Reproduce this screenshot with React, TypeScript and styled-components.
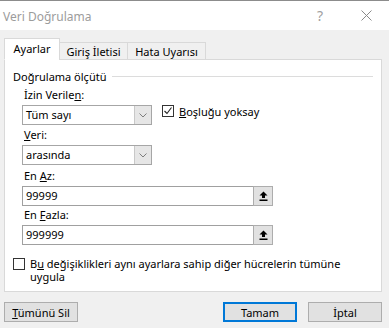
import * as React from "react";
import styled, { createGlobalStyle } from "styled-components";

const GlobalStyle = createGlobalStyle`
  html, body {
    margin: 0;
    padding: 0;
    background: #f0f0f0;
  }
  body {
    font-family: "Noto Sans", "Open Sans", sans-serif;
    font-size: 11px;
    color: #000;
  }
`;

const Window = styled.div`
  width: 389px;
  height: 328px;
  display: flex;
  flex-direction: column;
  background: #f0f0f0;
  overflow: hidden;
`;

const TitleBar = styled.div`
  height: 29px;
  border-top: 1px solid #8c8c8c;
  background: #fff;
  display: flex;
  align-items: center;
  padding-left: 3px;
`;

const Title = styled.div`
  flex: 1;
  color: #9c9c9c;
  font-size: 12px;
  padding-top: 1px;
`;

const TitleButton = styled.div<{ $width: number }>`
  width: ${(p) => p.$width}px;
  height: 29px;
  display: flex;
  align-items: center;
  justify-content: center;
  color: #a0a0a0;
  font-size: 14px;
`;

const Body = styled.div`
  flex: 1;
  display: flex;
  flex-direction: column;
  padding: 8px 7px 0 4px;
`;

const TabStrip = styled.div`
  display: flex;
  align-items: flex-end;
  height: 22px;
  position: relative;
  z-index: 1;
  margin-bottom: -1px;
`;

const Tab = styled.div<{ $active?: boolean; $width: number }>`
  width: ${(p) => p.$width}px;
  height: ${(p) => (p.$active ? 22 : 18)}px;
  box-sizing: border-box;
  border: 1px solid #d9d9d9;
  border-bottom: ${(p) => (p.$active ? "1px solid #fff" : "1px solid #d9d9d9")};
  margin-left: ${(p) => (p.$active ? 0 : -1)}px;
  background: ${(p) => (p.$active ? "#fff" : "#f0f0f0")};
  display: flex;
  align-items: center;
  justify-content: center;
  padding-bottom: ${(p) => (p.$active ? 2 : 0)}px;
  &:first-child {
    margin-left: 0;
  }
`;

const Panel = styled.div`
  height: 233px;
  box-sizing: border-box;
  background: #fff;
  border: 1px solid #d9d9d9;
  padding: 8px 8px 0 8px;
  display: flex;
  flex-direction: column;
`;

const Legend = styled.div`
  display: flex;
  align-items: center;
  height: 16px;
  gap: 6px;
  &::after {
    content: "";
    flex: 1;
    height: 1px;
    background: #dcdcdc;
  }
`;

const Group = styled.div`
  padding-left: 9px;
  display: flex;
  flex-direction: column;
`;

const Label = styled.div<{ $top: number }>`
  height: 16px;
  line-height: 16px;
  margin-top: ${(p) => p.$top}px;
  margin-bottom: 2px;
  padding-left: 2px;
`;

const Row = styled.div`
  display: flex;
  align-items: flex-start;
  gap: 10px;
`;

const Select = styled.div`
  width: 130px;
  height: 20px;
  box-sizing: border-box;
  border: 1px solid #a6a6a6;
  background: #fff;
  display: flex;
  align-items: stretch;
`;

const SelectValue = styled.div`
  flex: 1;
  padding-left: 3px;
  line-height: 18px;
`;

const SelectArrow = styled.div`
  width: 16px;
  background: #e6e6e6;
  border-left: 1px solid #c8c8c8;
  display: flex;
  align-items: center;
  justify-content: center;
`;

const TextField = styled.div`
  width: 251px;
  height: 20px;
  box-sizing: border-box;
  border: 1px solid #a0a0a0;
  background: #fff;
  display: flex;
  align-items: stretch;
`;

const FieldValue = styled.div`
  flex: 1;
  padding-left: 3px;
  line-height: 18px;
`;

const PickButton = styled.div`
  width: 20px;
  box-sizing: border-box;
  background: #e1e1e1;
  border: 1px solid #adadad;
  margin: -1px -1px -1px 0;
  display: flex;
  align-items: center;
  justify-content: center;
`;

const Check = styled.div`
  width: 12px;
  height: 12px;
  box-sizing: border-box;
  border: 1px solid #333;
  background: #fff;
  flex-shrink: 0;
  display: flex;
  align-items: center;
  justify-content: center;
`;

const CheckLabel = styled.label`
  display: flex;
  align-items: flex-start;
  gap: 5px;
  line-height: 13px;
`;

const ApplyRow = styled(CheckLabel)`
  margin-top: 12px;
  width: 330px;
  & > ${Check} {
    margin-top: 1px;
  }
`;

const ButtonRow = styled.div`
  display: flex;
  align-items: center;
  margin-top: 10px;
  gap: 11px;
`;

const Button = styled.div<{ $primary?: boolean }>`
  width: 74px;
  height: 20px;
  box-sizing: border-box;
  background: #e1e1e1;
  border: ${(p) => (p.$primary ? "2px solid #0078d7" : "1px solid #adadad")};
  display: flex;
  align-items: center;
  justify-content: center;
`;

const Spacer = styled.div`
  flex: 1;
`;

const Chevron = () => (
  <svg width="8" height="5" viewBox="0 0 8 5">
    <path d="M0.5 0.5 L4 4 L7.5 0.5" fill="none" stroke="#707070" strokeWidth="0.9" />
  </svg>
);

const UploadIcon = () => (
  <svg width="9" height="10" viewBox="0 0 9 10">
    <path d="M4.5 0.5 L8.5 4.5 L6 4.5 L6 7 L3 7 L3 4.5 L0.5 4.5 Z" fill="#000" />
    <rect x="0.5" y="8.5" width="8" height="1.5" fill="#000" />
  </svg>
);

const CheckMark = () => (
  <svg width="10" height="10" viewBox="0 0 10 10">
    <path d="M1.5 5 L4 7.5 L8.5 1.5" fill="none" stroke="#222" strokeWidth="1.1" />
  </svg>
);

const App: React.FC = () => {
  return (
    <>
      <GlobalStyle />
      <Window>
        <TitleBar>
          <Title>Veri Doğrulama</Title>
          <TitleButton $width={46}>?</TitleButton>
          <TitleButton $width={46}>
            <svg width="11" height="11" viewBox="0 0 11 11">
              <path d="M0.5 0.5 L10.5 10.5 M10.5 0.5 L0.5 10.5" stroke="#8a8a8a" strokeWidth="1" />
            </svg>
          </TitleButton>
        </TitleBar>
        <Body>
          <TabStrip>
            <Tab $active $width={56}>Ayarlar</Tab>
            <Tab $width={69}>Giriş İletisi</Tab>
            <Tab $width={79}>Hata Uyarısı</Tab>
          </TabStrip>
          <Panel>
            <Legend>Doğrulama ölçütü</Legend>
            <Group>
              <Label $top={3}>
                İzin Verile<u>n</u>:
              </Label>
              <Row>
                <Select>
                  <SelectValue>Tüm sayı</SelectValue>
                  <SelectArrow>
                    <Chevron />
                  </SelectArrow>
                </Select>
                <CheckLabel>
                  <Check>
                    <CheckMark />
                  </Check>
                  <span>
                    <u>B</u>oşluğu yoksay
                  </span>
                </CheckLabel>
              </Row>
              <Label $top={2}>
                <u>V</u>eri:
              </Label>
              <Select>
                <SelectValue>arasında</SelectValue>
                <SelectArrow>
                  <Chevron />
                </SelectArrow>
              </Select>
              <Label $top={3}>
                En <u>A</u>z:
              </Label>
              <TextField>
                <FieldValue>99999</FieldValue>
                <PickButton>
                  <UploadIcon />
                </PickButton>
              </TextField>
              <Label $top={1}>
                En <u>F</u>azla:
              </Label>
              <TextField>
                <FieldValue>999999</FieldValue>
                <PickButton>
                  <UploadIcon />
                </PickButton>
              </TextField>
            </Group>
            <ApplyRow>
              <Check />
              <span>
                B<u>u</u> değişiklikleri aynı ayarlara sahip diğer hücrelerin tümüne uygula
              </span>
            </ApplyRow>
          </Panel>
          <ButtonRow>
            <Button>
              <span>
                <u>T</u>ümünü Sil
              </span>
            </Button>
            <Spacer />
            <Button $primary>Tamam</Button>
            <Button>İptal</Button>
          </ButtonRow>
        </Body>
      </Window>
    </>
  );
};

export default App;
